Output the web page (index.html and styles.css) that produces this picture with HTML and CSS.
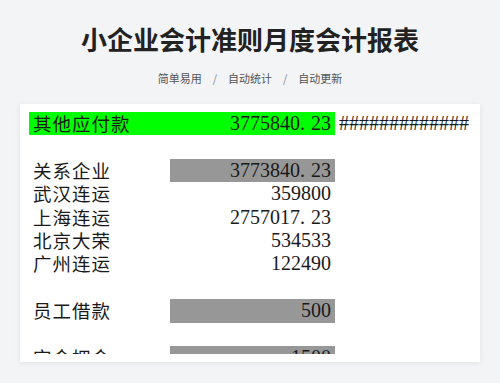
FILE: index.html
```html
<!DOCTYPE html>
<html lang="zh">
<head>
<meta charset="utf-8">
<link rel="stylesheet" href="styles.css">
</head>
<body>
<header class="head">
  <h1 class="title">小企业会计准则月度会计报表</h1>
  <div class="sub">
    <span>简单易用</span><span class="sep">/</span><span>自动统计</span><span class="sep">/</span><span>自动更新</span>
  </div>
</header>
<main class="card">
  <div class="sheet">
    <div class="row green"><span class="lab">其他应付款</span><span class="val">3775840<span class="dot">.</span>23</span><span class="ext">#############</span></div>
    <div class="row"><span class="lab"></span><span class="val"></span><span class="ext"></span></div>
    <div class="row"><span class="lab">关系企业</span><span class="val gray">3773840<span class="dot">.</span>23</span><span class="ext"></span></div>
    <div class="row"><span class="lab">武汉连运</span><span class="val">359800</span><span class="ext"></span></div>
    <div class="row"><span class="lab">上海连运</span><span class="val">2757017<span class="dot">.</span>23</span><span class="ext"></span></div>
    <div class="row"><span class="lab">北京大荣</span><span class="val">534533</span><span class="ext"></span></div>
    <div class="row"><span class="lab">广州连运</span><span class="val">122490</span><span class="ext"></span></div>
    <div class="row"><span class="lab"></span><span class="val"></span><span class="ext"></span></div>
    <div class="row"><span class="lab">员工借款</span><span class="val gray">500</span><span class="ext"></span></div>
    <div class="row"><span class="lab"></span><span class="val"></span><span class="ext"></span></div>
    <div class="row"><span class="lab">定金押金</span><span class="val gray">1500</span><span class="ext"></span></div>
  </div>
</main>
</body>
</html>
```
FILE: styles.css
```css
html, body {
  margin: 0;
  padding: 0;
  background: #f3f4f6;
}
body {
  width: 500px;
  height: 383px;
  overflow: hidden;
  font-family: "Noto Sans CJK SC", "Noto Sans", sans-serif;
}
.head {
  padding-top: 21px;
  text-align: center;
}
.title {
  margin: 0;
  font-size: 26px;
  line-height: 36px;
  font-weight: 700;
  color: #222;
}
.sub {
  margin-top: 13px;
  font-size: 11px;
  line-height: 16px;
  color: #555;
}
.sep {
  margin: 0 11px;
  color: #888;
}
.card {
  display: block;
  margin: 18px 20px 0;
  height: 258px;
  box-sizing: border-box;
  padding: 8px 9px;
  background: #fff;
  box-shadow: 0 1px 6px rgba(0, 0, 0, 0.08);
}
.sheet {
  height: 242px;
  overflow: hidden;
}
.row {
  display: grid;
  grid-template-columns: 141px 165px auto;
  height: 23.4px;
  font-size: 20px;
  line-height: 23.4px;
  color: #1a1a1a;
}
.lab {
  padding-left: 4px;
  font-family: "Noto Sans CJK SC", sans-serif;
  font-weight: 400;
  font-size: 18.5px;
  letter-spacing: 1px;
  white-space: nowrap;
}
.val {
  padding-right: 4px;
  text-align: right;
  font-family: "Liberation Serif", "Noto Sans CJK SC", serif;
  white-space: nowrap;
}
.dot {
  margin-right: 6px;
}
.ext {
  padding-left: 4px;
  font-family: "Liberation Serif", serif;
  white-space: nowrap;
}
.green .lab, .green .val {
  background: #00ff00;
}
.gray {
  background: #979797;
}
```
